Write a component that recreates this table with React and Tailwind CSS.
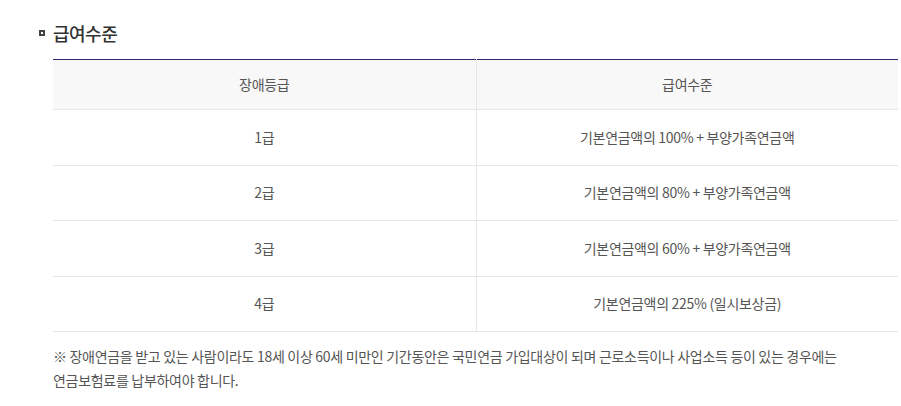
const rows = [
  { grade: "1급", level: "기본연금액의 100% + 부양가족연금액" },
  { grade: "2급", level: "기본연금액의 80% + 부양가족연금액" },
  { grade: "3급", level: "기본연금액의 60% + 부양가족연금액" },
  { grade: "4급", level: "기본연금액의 225% (일시보상금)" },
];

export default function App() {
  return (
    <div
      className="w-[901px] h-[406px] bg-white pt-[20px] text-[#555]"
      style={{ fontFamily: '"Noto Sans CJK KR", "Noto Sans", sans-serif' }}
    >
      <div className="flex items-center h-[26px] pl-[39px]">
        <span className="w-[6px] h-[6px] border-2 border-[#444] mr-[8px]" />
        <h3 className="text-[18px] text-[#333] font-medium tracking-[-0.5px]">급여수준</h3>
      </div>

      <div className="ml-[53px] w-[845px] mt-[13px]">
        <table className="w-full border-collapse border-t-[1px] border-[#2c2a6b] text-[14px] tracking-[-0.3px]">
          <thead>
            <tr className="bg-[#f8f8f8] h-[50px]">
              <th className="w-[423px] font-normal border-b border-r border-[#e6e6e6]">장애등급</th>
              <th className="font-normal border-b border-[#e6e6e6]">급여수준</th>
            </tr>
          </thead>
          <tbody>
            {rows.map(r => (
              <tr key={r.grade} className="h-[55.5px]">
                <td className="text-center border-b border-r border-[#e6e6e6]">{r.grade}</td>
                <td className="text-center border-b border-[#e6e6e6]">{r.level}</td>
              </tr>
            ))}
          </tbody>
        </table>

        <p className="mt-[12px] text-[14px] leading-[24px] tracking-[-0.3px] text-[#555]">
          ※ 장애연금을 받고 있는 사람이라도 18세 이상 60세 미만인 기간동안은 국민연금 가입대상이 되며 근로소득이나 사업소득 등이 있는 경우에는<br />
          연금보험료를 납부하여야 합니다.
        </p>
      </div>
    </div>
  );
}
